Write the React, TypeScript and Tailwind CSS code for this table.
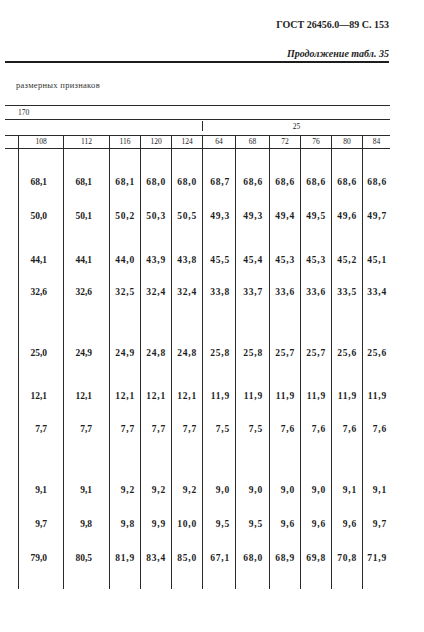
const cols = [45, 46, 31, 31, 31, 33, 34, 31, 31, 31, 28]
const pads = [16, 17, 5, 5, 5, 5, 6, 5, 5, 5, 3]
const heads = ["108", "112", "116", "120", "124", "64", "68", "72", "76", "80", "84"]

// gap above each row, row text box is 14px tall
const rows: { gap: number; v: string[] }[] = [
  { gap: 26, v: ["68,1", "68,1", "68,1", "68,0", "68,0", "68,7", "68,6", "68,6", "68,6", "68,6", "68,6"] },
  { gap: 20, v: ["50,0", "50,1", "50,2", "50,3", "50,5", "49,3", "49,3", "49,4", "49,5", "49,6", "49,7"] },
  { gap: 30, v: ["44,1", "44,1", "44,0", "43,9", "43,8", "45,5", "45,4", "45,3", "45,3", "45,2", "45,1"] },
  { gap: 18, v: ["32,6", "32,6", "32,5", "32,4", "32,4", "33,8", "33,7", "33,6", "33,6", "33,5", "33,4"] },
  { gap: 47, v: ["25,0", "24,9", "24,9", "24,8", "24,8", "25,8", "25,8", "25,7", "25,7", "25,6", "25,6"] },
  { gap: 29, v: ["12,1", "12,1", "12,1", "12,1", "12,1", "11,9", "11,9", "11,9", "11,9", "11,9", "11,9"] },
  { gap: 19, v: ["7,7", "7,7", "7,7", "7,7", "7,7", "7,5", "7,5", "7,6", "7,6", "7,6", "7,6"] },
  { gap: 47, v: ["9,1", "9,1", "9,2", "9,2", "9,2", "9,0", "9,0", "9,0", "9,0", "9,1", "9,1"] },
  { gap: 20, v: ["9,7", "9,8", "9,8", "9,9", "10,0", "9,5", "9,5", "9,6", "9,6", "9,6", "9,7"] },
  { gap: 20, v: ["79,0", "80,5", "81,9", "83,4", "85,0", "67,1", "68,0", "68,9", "69,8", "70,8", "71,9"] },
]

function Row({ gap, v }: { gap: number; v: string[] }) {
  return (
    <div className="flex pl-[18px]">
      {v.map((t, i) => (
        <div
          key={i}
          className={`border-l border-[#2a2a2a] text-right text-[9.5px] leading-[14px] font-bold ${i > 1 ? "tracking-[0.8px]" : ""}`}
          style={{ width: cols[i], paddingTop: gap, paddingRight: pads[i] }}
        >
          {t}
        </div>
      ))}
    </div>
  )
}

export default function App() {
  return (
    <div className="w-[424px] h-[632px] bg-white text-[#1d1d1d] overflow-hidden" style={{ fontFamily: '"Liberation Serif", serif' }}>

      <div className="pt-[18px] pr-[35px] text-right text-[10px] leading-[14px] font-bold">
        ГОСТ 26456.0—89 С. 153
      </div>
      <div className="mt-[15px] pr-[35px] text-right text-[10px] leading-[14px] font-bold italic">
        Продолжение табл. 35
      </div>
      <div className="ml-[5px] w-[384px] h-[2px] bg-[#1d1d1d]" />

      <div className="mt-[18px] pl-[16px] text-[8.5px] leading-[8px] text-[#333] tracking-[0.3px]">
        размерных признаков
      </div>

      <div className="mt-[16px] ml-[5px] w-[385px] border-t border-[#2a2a2a]">
        <div className="h-[13px] pl-[13px] text-[7.5px] leading-[14px]">170</div>
      </div>
      <div className="ml-[5px] w-[385px] border-t border-[#2a2a2a] flex">
        <div className="w-[197px] h-[15px]" />
        <div className="flex-1 border-l border-[#2a2a2a] mt-[1px] h-[10px] text-center text-[7.5px] leading-[12px]">25</div>
      </div>
      <div className="ml-[5px] w-[385px] border-t border-[#2a2a2a]">
        <div className="flex pl-[13px]">
          {heads.map((h, i) => (
            <div key={i} className="border-l border-[#2a2a2a] h-[12px] text-center text-[7.5px] leading-[12px]" style={{ width: cols[i] }}>
              {h}
            </div>
          ))}
        </div>
      </div>
      <div className="ml-[5px] w-[385px] border-t border-[#2a2a2a]" />

      <div>
        {rows.map((r, i) => (
          <Row key={i} gap={r.gap} v={r.v} />
        ))}
        <div className="flex pl-[18px]">
          {cols.map((w, i) => (
            <div key={i} className="border-l border-[#2a2a2a] h-[24px]" style={{ width: w }} />
          ))}
        </div>
      </div>
    </div>
  )
}
